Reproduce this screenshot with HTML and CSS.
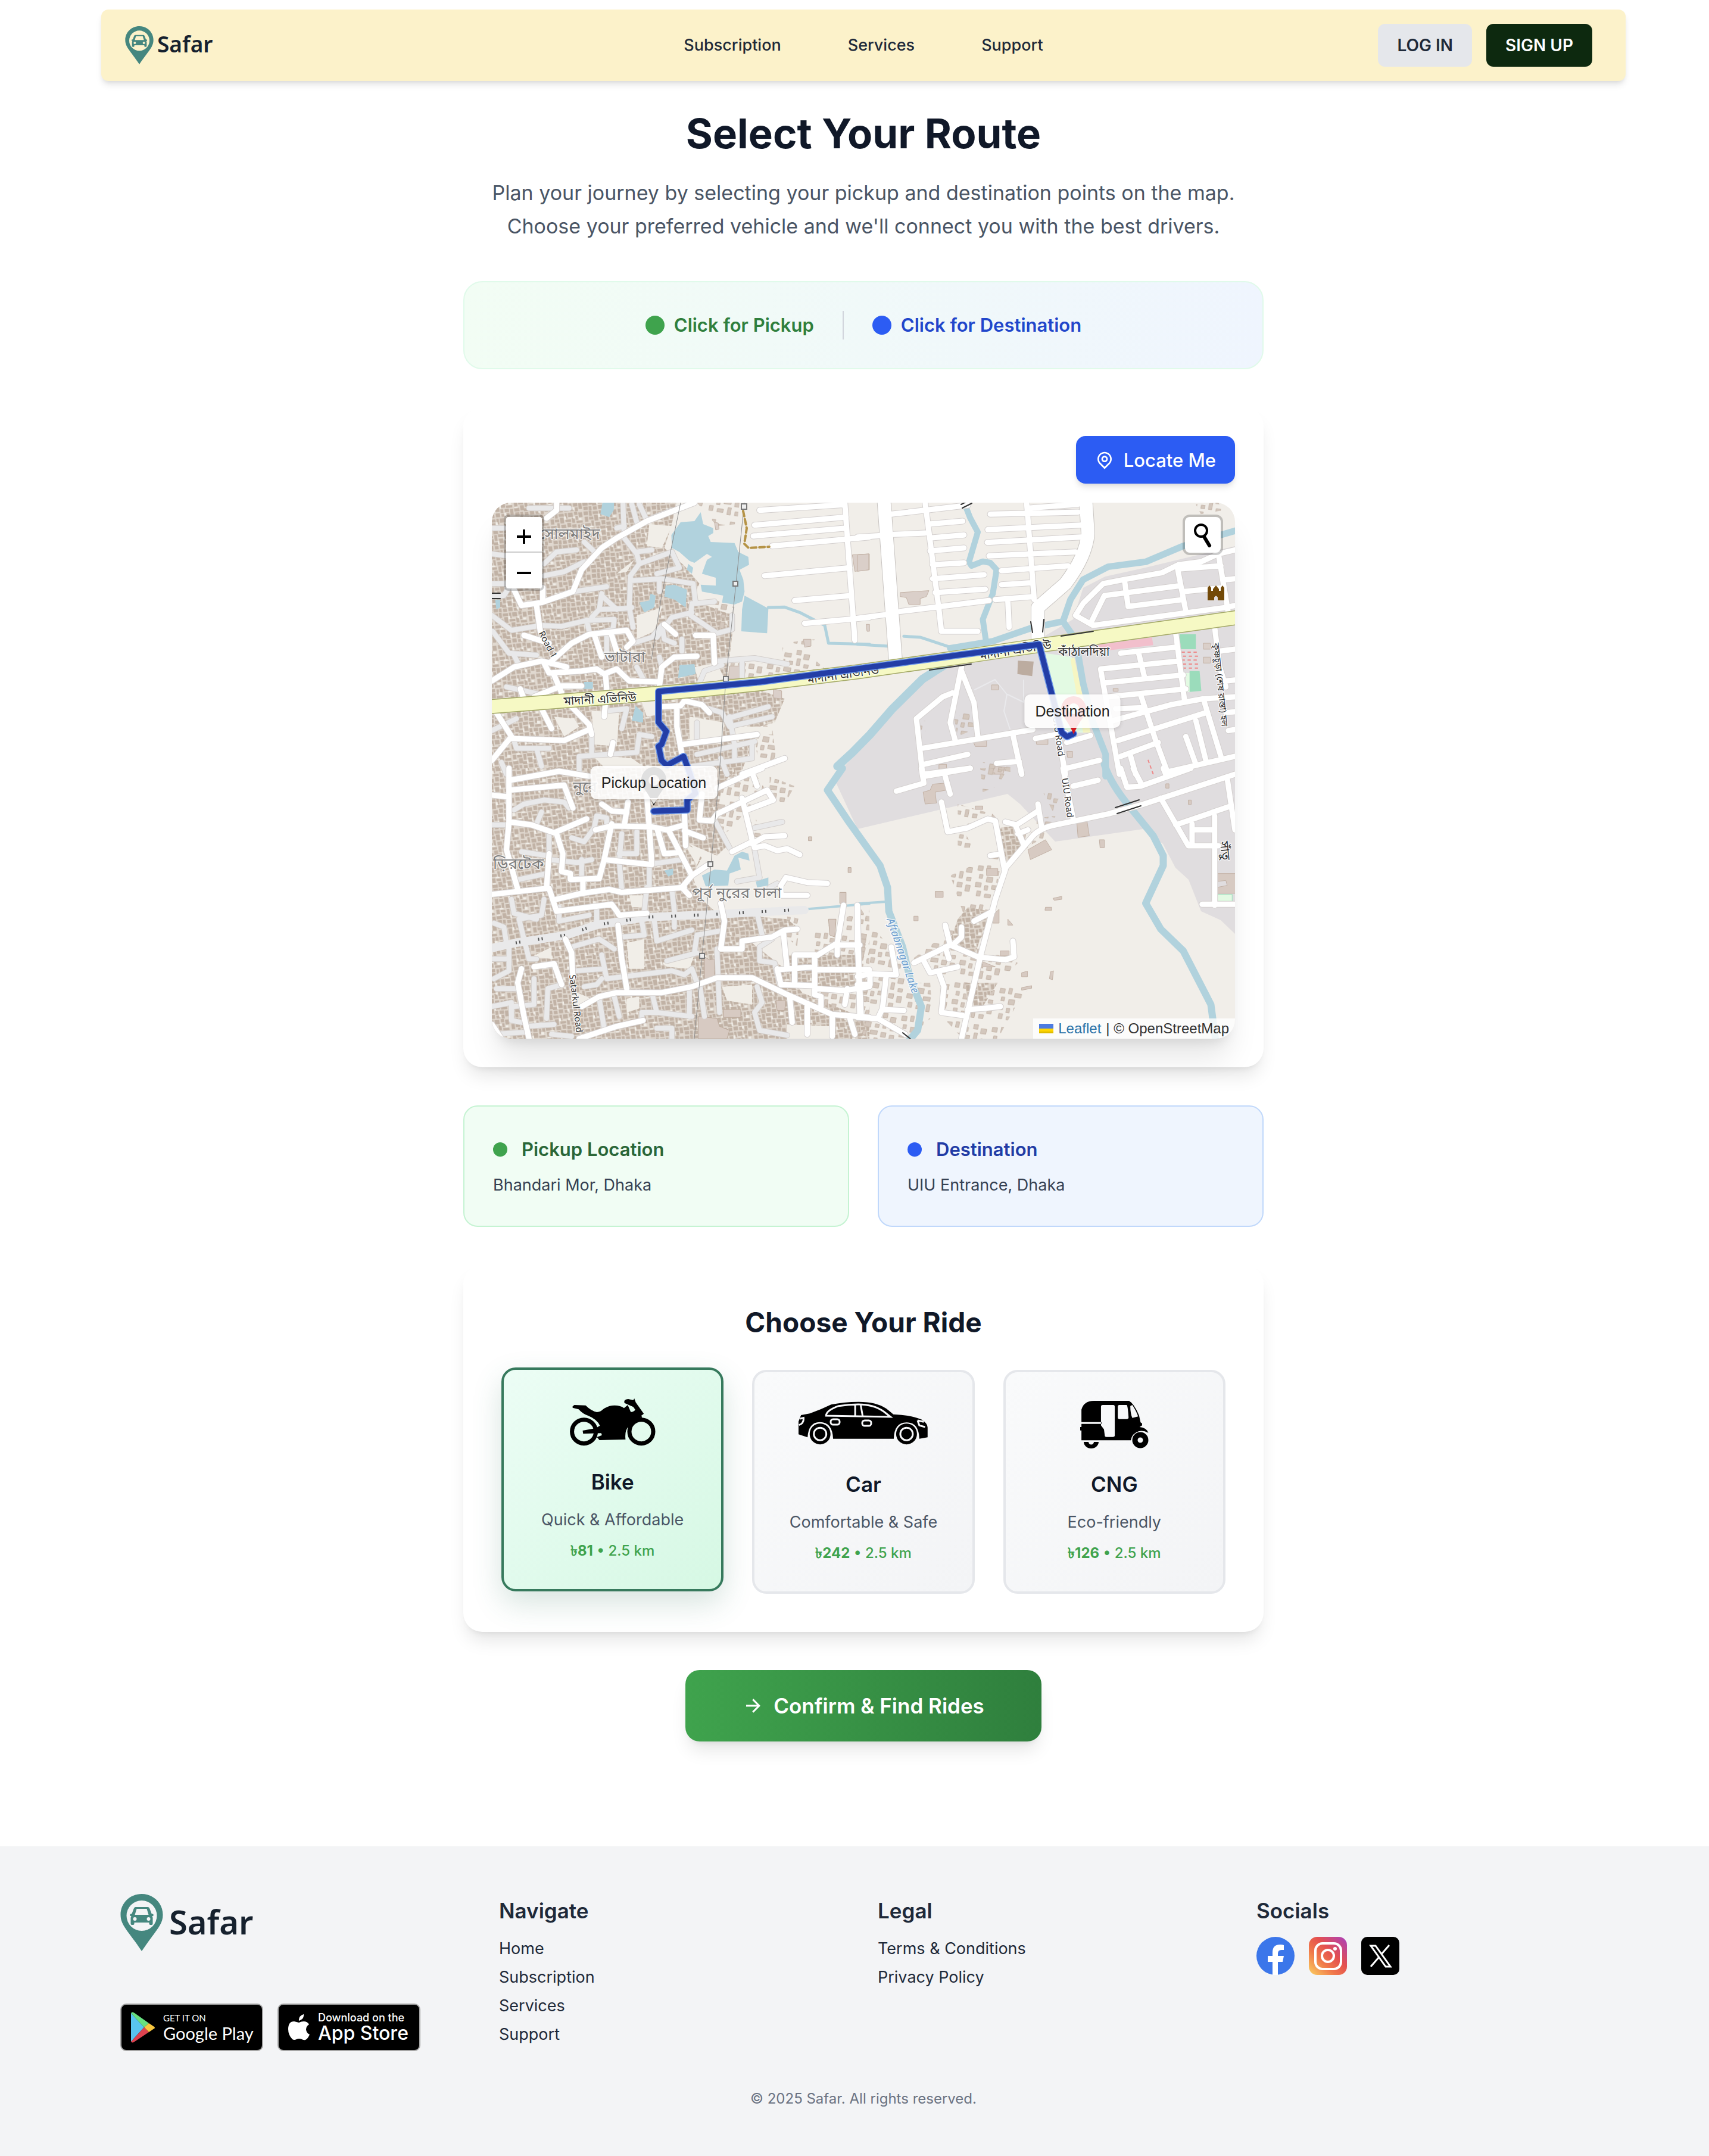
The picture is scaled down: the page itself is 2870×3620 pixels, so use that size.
FILE: index.html
```html
<!DOCTYPE html>
<html lang="en">
<head>
<meta charset="utf-8">
<meta name="viewport" content="width=device-width, initial-scale=1">
<title>Safar – Select Your Route</title>
<link rel="stylesheet" href="styles.css">
</head>
<body>
<svg class="sprite" aria-hidden="true">
  <symbol id="logo-pin" viewBox="0 0 71 96">
    <path fill-rule="evenodd" d="M35.500 0C55 0 71 15 71 35C71 53 58 62 35.500 96C13 62 0 53 0 35C0 15 16 0 35.500 0ZM35.500 11A25 25 0 1 0 35.500 62A25 25 0 1 0 35.500 11Z"/>
    <path fill-rule="evenodd" d="M25 22H46Q48 22 49 25L52 33L55 34V37H53L54 40V50Q54 52 52 52H50Q48 52 48 50V48H23V50Q23 52 21 52H19Q17 52 17 50V40L18 37H16V34L19 33L22 25Q23 22 25 22ZM27 25L24 35H47L44 25ZM24 39A3 3 0 1 0 24 45A3 3 0 1 0 24 39ZM47 39A3 3 0 1 0 47 45A3 3 0 1 0 47 39Z"/>
  </symbol>
</svg>

<div class="page">
  <header class="navbar">
    <a class="logo" href="#"><svg class="logo-pin"><use href="#logo-pin"/></svg><span class="logo-name">Safar</span></a>
    <nav class="nav-links">
      <a href="#">Subscription</a>
      <a href="#">Services</a>
      <a href="#">Support</a>
    </nav>
    <div class="nav-actions">
      <button class="btn btn-light" type="button">LOG IN</button>
      <button class="btn btn-dark" type="button">SIGN UP</button>
    </div>
  </header>

  <main class="content">
    <h1>Select Your Route</h1>
    <p class="lead">Plan your journey by selecting your pickup and destination points on the map.<br>Choose your preferred vehicle and we'll connect you with the best drivers.</p>

    <section class="legend">
      <div class="legend-item legend-pickup"><span class="dot dot-lg dot-green"></span>Click for Pickup</div>
      <span class="legend-divider"></span>
      <div class="legend-item legend-dest"><span class="dot dot-lg dot-blue"></span>Click for Destination</div>
    </section>

    <section class="card map-card">
      <button class="locate" type="button">
        <svg viewBox="0 0 24 24" width="32" height="32" fill="currentColor"><path d="M12 20.8995L16.9497 15.9497C19.6834 13.2161 19.6834 8.78392 16.9497 6.05025C14.2161 3.31658 9.78392 3.31658 7.05025 6.05025C4.31658 8.78392 4.31658 13.2161 7.05025 15.9497L12 20.8995ZM12 23.7279L5.63604 17.364C2.12132 13.8492 2.12132 8.15076 5.63604 4.63604C9.15076 1.12132 14.8492 1.12132 18.364 4.63604C21.8787 8.15076 21.8787 13.8492 18.364 17.364L12 23.7279ZM12 13C13.1046 13 14 12.1046 14 11C14 9.89543 13.1046 9 12 9C10.8954 9 10 9.89543 10 11C10 12.1046 10.8954 13 12 13ZM12 15C9.79086 15 8 13.2091 8 11C8 8.79086 9.79086 7 12 7C14.2091 7 16 8.79086 16 11C16 13.2091 14.2091 15 12 15Z"/></svg>
        Locate Me
      </button>

      <div class="map">
        <svg class="map-canvas" viewBox="0 0 1248 900" preserveAspectRatio="xMidYMid slice">
          <defs>
            <pattern id="dense" width="72" height="66" patternUnits="userSpaceOnUse" patternTransform="rotate(-6) scale(1.9 2.4)">
              <rect width="72" height="66" fill="#e0d8cf"/>
              <path fill="#c1b2a5" d="M1 1h9v8H1zM12 0h6v11h-6zM20 2h11v6H20zM33 1h5v12h-5zM40 1h10v9H40zM53 0h7v7h-7zM62 2h8v10h-8zM2 12h7v11H2zM11 13h9v6h-9zM22 10h8v12h-8zM33 15h12v5H33zM47 12h6v11h-6zM55 9h5v8h-5zM56 19h13v5H56zM1 26h12v6H1zM15 21h5v12h-5zM23 25h10v8H23zM36 22h8v9h-8zM46 26h9v7h-9zM58 27h5v11h-5zM65 26h6v8h-6zM2 35h7v10H2zM11 36h10v5H11zM24 35h6v12h-6zM32 34h11v6H32zM45 35h10v10H45zM57 41h13v5H57zM1 48h11v7H1zM14 43h8v11h-8zM33 43h9v10h-9zM44 48h6v8h-6zM53 48h9v7h-9zM64 49h7v12h-7zM2 57h9v7H2zM13 57h6v8h-6zM21 50h10v6H21zM22 58h8v7h-8zM33 56h9v8h-9zM45 58h8v6h-8zM56 57h6v8h-6z"/>
              <path fill="#f1eee8" d="M31 8h4v7h-4zM50 10h4v4h-4zM10 32h8v3h-8zM43 40h3v7h-3zM62 14h5v4h-5zM30 47h3v8h-3zM2 45h7v3H2zM62 34h6v6h-6zM51 56h4v6h-4z"/>
            </pattern>
            <pattern id="sparse" width="83" height="71" patternUnits="userSpaceOnUse" patternTransform="rotate(9) scale(2.2 2.8)">
              <path fill="#d3c7bd" stroke="#c0b0a3" d="M3 4h9v8H3zM19 2h6v10h-6zM31 10h12v7H31zM52 3h8v8h-8zM66 9h10v9H66zM8 19h6v7H8zM22 22h11v9H22zM41 24h7v6h-7zM55 18h6v12h-6zM69 27h8v6h-8zM4 34h10v8H4zM21 38h6v8h-6zM34 36h13v7H34zM54 38h9v8h-9zM70 41h8v11h-8zM9 49h7v9H9zM24 53h11v6H24zM43 49h6v13h-6zM57 55h8v7h-8z"/>
            </pattern>
            <clipPath id="map-area"><rect width="1248" height="900"/></clipPath>

            <g id="roads-nw">
              <path d="M870 72L680 165L560 250L500 300L420 410L385 520L260 575L180 590L150 510M240 590L255 720M265 500V570M320 72V110L280 150M190 740L290 780M62 970L150 900L260 870L360 900M300 870L380 780L450 735L600 715L625 770L600 800M470 735L500 850M540 740L560 820M270 880L290 930L420 920L480 910L510 935L560 910L610 970L730 975M515 935L520 1010L510 1150M310 940L340 1030M730 1000L740 900L790 850L880 845M175 1010L190 1060M230 1050L340 995H420M750 685L795 735M875 740H945L950 880M260 1110L300 1210M80 1130L140 1250L62 1370M140 1260L350 1270L450 1215M380 1100L450 1190L460 1240M740 1100L815 1095L830 1070L900 1090L930 1130M800 1100V1200L820 1340M820 1290L1120 1240M1060 1440L1230 1360M545 1280L535 1340"/>
              <path d="M1470 72L1480 250L1510 765M1130 110L1470 82M1110 185L1475 145M1105 240L1475 200M1180 290L1568 245M1150 440L1490 400M1270 565L1495 540M1310 680L1568 650"/>
            </g>
            <g id="lanes-nw">
              <path d="M585 72L590 250L640 330L650 380L615 440L610 600L625 700M650 380L780 320L810 400L720 430M640 320L700 310M615 465L740 455L865 480L875 580L950 570M730 460V520M860 580L855 640L960 730L1020 710V640M720 750L780 650L860 625M625 780L700 750L740 690L750 760L790 780M270 440L350 420L430 370M390 520L520 495M500 530L490 610L590 605L620 600M500 540L560 610M490 610L460 650M62 640L140 715L260 690L340 695L440 665L550 660L545 710L480 730M440 665L450 720M65 720L130 830L240 840M150 840L170 890M62 200H110M62 330L120 340M62 480H140L110 540L62 545M210 100H370M560 200L590 190M430 270L480 330M270 380L320 320L400 310M620 80L640 170M650 80L680 160L780 110"/>
              <path d="M960 870L1110 855L1240 885M1060 870V960M890 980L910 920L980 890M730 850L740 900M820 760V820M640 900L670 970M300 1050L120 1000M62 1220L160 1160M150 1270L160 1310L290 1310M240 1310L260 1400M410 1440V1350L640 1330L650 1240L700 1250M460 1240V1340M580 1210L600 1110L530 1120M520 740V840M1000 1160L1165 1100M1010 1200L1180 1150M1010 1150L1030 1290V1360M880 1180V1260M880 1340L1110 1275M860 1400L1100 1360V1290M930 1110L980 1130L1010 1200M975 1360L1000 1440M100 1380L120 1440"/>
            </g>
            <g id="roads-ne">
              <path d="M270 72L325 610L335 720H480M0 245L95 238M145 232L270 225M135 130L440 85M285 180L420 165M290 250L425 235M290 315L425 300M300 385L425 375M300 455L505 435M310 525L510 508M0 655L120 635M170 620L525 565M550 560L700 545M600 565L605 700M675 72L705 560M680 100L880 80M530 130L880 120M520 208L890 185M518 272L890 245M525 340L870 320M575 415L840 390M575 485L700 475"/>
              <path d="M1506 310L1440 330L1370 370L1280 385L1215 425L1060 460L980 480L900 580L870 640L940 690L1470 600L1506 590M1065 460L1080 595L1300 560M930 680L985 540L1290 490M1440 330L1480 630M1275 390L1310 620M1290 405L1450 390M1300 520L1460 500M1470 460L1506 455"/>
              <path d="M970 910L1280 870M970 910L1045 1440M985 980L1300 940M1000 1050L1310 1010M1050 830L1270 800M1120 820L1145 950M1270 730L1305 1070M1020 1170L1250 1090L1380 1060L1506 1050M1130 1040L1190 1270L1240 1440M1030 1110L1140 1105M1040 1270L1390 1130M1050 1350L1200 1280M1090 1350L1110 1440M1230 1430L1506 1350M1350 1170L1390 1370M1310 1250L1350 1390M1425 700L1445 900L1470 1000M1380 1060L1450 1350M1445 820L1506 810M1470 970L1506 965M1470 1130L1506 1125M1480 1220L1506 1215"/>
              <path d="M415 900L370 1180L390 1270M415 920L465 1080L480 1250M380 1030L340 1050L235 1160L260 1440M255 1310L700 1215M710 1260L830 1230M620 1240L655 1440M265 1390L440 1340M265 1440L450 1410M555 1385L645 1375M800 1240L830 1440M835 1280L930 1245M835 1410L965 1370"/>
            </g>
            <g id="roads-sw">
              <path d="M62 135L130 145M135 60L330 15L450 40M130 110L350 85L385 200M130 0V270L120 410L165 610M130 270L220 285L310 325L440 255M320 330L345 430L340 520L375 530V560L490 555L510 460L540 280M510 460L620 475L700 485L690 300L680 130M475 310L540 290L700 295L760 310L830 285M590 290L605 170M500 180L540 215L600 220M720 300L750 430L800 425M770 320L860 540L920 490M860 540L820 600L850 640M830 220L835 390M830 315L905 350"/>
              <path d="M62 635L280 605L290 430M290 605L320 720L540 685L560 720L570 740L680 730M320 660L420 630L530 610L580 625L830 600M425 630V560M565 790L580 960L600 1110M355 860L380 930L385 1050M230 1000L310 985L340 1090M180 1010L165 1080L190 1250L210 1362M62 1290L100 1362M420 1200L490 1150L560 1130L740 1130L860 1100L960 1055H1100L1240 1140L1420 1240L1568 1255M410 1362L560 1300L665 1270M975 680L990 770L975 910H1060V870L1180 850L1230 815L1280 810M1225 830L1240 1010M1200 1010L1215 1090L1350 1095M1270 940H1350M1270 940V1090M1200 1015L1350 1000M1350 950V1140L1375 1150V1200M1350 950L1440 880L1465 690M1520 690L1530 1250M1350 1015H1568M1440 940V890L1530 890M1250 1150L1260 1280M1320 1200V1340M1420 1240V1350M1490 1260L1510 1340M1360 1110L1470 1120L1568 1100M1470 1190L1480 1110"/>
              <path d="M960 100L1100 20L1140 0M900 130L890 260L940 265L960 230L1160 110L1185 160L1080 210M1100 20L1120 90M1060 150L1100 360L1110 400L1150 390L1200 415L1240 405L1290 435M1100 380L1150 345L1230 340M1020 420L1100 370M1215 640V590L1235 550L1320 575L1400 580M1215 640H1320"/>
            </g>
            <g id="lanes-sw">
              <path d="M62 285H120M270 160L190 180L150 210M270 160L350 170L370 200M240 280L260 220M380 350L430 370L470 300L480 240L520 250V290M290 330V460L400 475L460 460M580 330L570 470L580 610M640 320V430H570M170 560L280 530M180 420L280 440M420 460V560M690 490V600M710 480L820 460M140 660L150 730L240 760M70 780L110 800L120 880M270 660L260 740L170 760L210 960H240M130 900V1020L70 1060M62 960H130M80 1110H160M330 700V770L450 740M480 700V790M780 610L790 720V800M680 600L670 720M380 900L490 860L550 910M580 850L670 840L660 770M710 770L720 870L860 815M870 930L880 840L970 820M760 970L880 930M500 940L520 1060L780 1020L830 1040L860 1010L880 1080M400 1020L510 1010M430 1100L480 1090L500 1060M280 1260L285 1110L340 1090M550 1150L570 1250M490 1160L510 1310M700 1130L720 1230L660 1230V1270M720 1230L860 1250M850 1110V1250M960 910L970 1230M890 1080L910 1250M1180 860L1130 900V970L1190 980L1210 1090M1120 1100L1140 1180L1110 1230L1130 1320L1240 1345M1120 730L1140 840M1110 410L1130 550L1040 570M1170 600L1200 580M950 260L1010 400M1110 300L1220 270M230 1060V1190L150 1200M62 1200L140 1180V1270L180 1280M62 1340L190 1330M200 1300L310 1290M300 1340L380 1350M720 1310H780V1362"/>
            </g>
            <g id="roads-se">
              <path d="M255 0L265 75L155 115M270 40L450 0M350 40L370 130M335 170L360 320L440 300L520 255L550 265L585 500M530 440L575 430M585 510L700 340Q730 300 790 285L1000 230L1130 185L1506 30M590 510L550 660L490 950L415 1362M720 180L735 300M590 270L635 285L720 215M630 285L665 390M640 330L680 310M820 0L860 250M860 90L960 60M1050 0L1075 95L1130 90L1330 0M1100 0L1135 85M1220 0L1230 30M1210 150L1320 390L1440 390M1270 285L1490 190M1335 280V385M1340 310H1420M1425 240V690M1375 685H1506M1475 50L1506 310"/>
              <path d="M350 790L370 890L480 950L590 965L625 950L620 870M370 890L225 980M350 900L365 960M415 800V850L380 890M465 770L540 720M260 960L290 1030L400 1000M325 1030L345 1100L335 1230L420 1245M440 1215L500 1210L570 1200M135 900L155 1040L50 1035M115 1040L100 1210L85 1250M100 1215L185 1220M0 1255L80 1260L190 1340M0 1050L50 1035V1090H0M0 700V890L15 1250M650 0L655 30"/>
            </g>
            <path id="avenue" d="M-10 343L184 328L353 314L450 304L614 284L782 260L917 240L1258 192"/>
            <path id="route" d="M272 518L328 516V499L342 488L333 456L322 426L294 441L285 433L280 409L285 406L293 384L280 369V317L450 301L614 279L782 256L919 238L957 386L966 393L977 388"/>
          </defs>

          <g clip-path="url(#map-area)">
            <rect width="1248" height="900" fill="#f1eee9"/>
            <path fill="#e0dddf" d="M580 456L614 419L723 303L753 286L782 262L925 226L976 196L993 143L1030 124L1098 109L1248 73V724L1224 701L1191 686L1170 633L1148 613L1127 573L1094 548L946 569L887 506L866 489L614 548L576 466Z"/>

            <g transform="matrix(.4209 0 0 .3333 -26 -24)">
              <path fill="url(#dense)" d="M40 60H800L780 180L750 300L830 390L890 480L860 560L980 620L1030 640L1000 960L1230 1060L1190 1180L1130 1200L1050 1450H40Z"/>
              <path fill="url(#sparse)" d="M880 72H1050L1040 180L960 190ZM950 560L1030 600L1020 700L960 720ZM1220 780L1350 760L1340 850L1400 920L1230 950ZM1000 880H1300V960H1000ZM1100 1180L1180 1200L1200 1400L1130 1420Z"/>
              <path fill="#f1eee8" d="M640 640L740 600L710 720L640 760ZM460 1120L570 1130L560 1300L470 1290ZM310 1150L390 1160L410 1200L350 1250ZM630 360L600 420L560 430ZM870 900L960 880L990 960L890 990ZM690 180L780 190L740 300L680 290ZM850 1150L990 1180L980 1260L850 1280ZM1010 1200H1180V1240H1030ZM460 1340L620 1360L690 1420H520ZM650 1040L720 1060V1140L680 1150Z"/>
              <path fill="#dacfc9" stroke="#c3b2a6" d="M1500 335L1568 330V410L1510 418ZM1305 760H1335V795L1310 800ZM1010 895H1055V960H1005ZM950 170L965 175L968 205L955 210ZM1185 1010L1218 1020V1060L1185 1055Z"/>
              <path fill="#b1d2dd" d="M495 130L505 60H550L548 110L530 145ZM815 170L870 165L895 120L905 180L945 200V225L925 240L935 270L1030 275L1045 320L1085 345L1088 385L1050 410L1065 460L1070 520L1060 570L1030 585L980 575L985 540L900 520L895 485L955 490V450L900 430L920 360L940 345L920 330L870 375L850 365L810 320L780 300L778 235ZM755 490L790 485L840 510L835 600L790 560L750 545ZM695 530L715 540L710 600L670 625L650 575L690 565ZM1070 540L1165 605L1160 730L1057 720L1060 610ZM810 890L870 885L875 935L805 955ZM430 975H465V1010H425ZM635 1095L665 1130V1180L620 1170ZM75 560H95V600L80 610ZM845 380L865 400L860 430L840 410Z"/>
              <path class="line" stroke="#b1d2dd" stroke-width="5" d="M1165 600L1230 598L1290 625L1390 690L1405 780L1568 785"/>
            </g>
            <g transform="matrix(.4209 0 0 .3333 -26 446)">
              <path fill="url(#dense)" d="M40 0H1040L980 80L960 250L1010 380L960 440L850 380L900 450L860 540L900 660L960 730L1240 760L1280 800L1100 880L1220 1000L1300 1130L1568 1270V1380H40Z"/>
              <path fill="url(#sparse)" d="M960 60L1100 0L1150 100L1020 300L940 380L900 300ZM1170 40L1270 90L1230 180L1170 140ZM1110 230L1150 400L1080 330ZM1240 740L1290 760L1280 900L1240 850ZM1350 820L1568 700V1250L1350 1180Z"/>
              <path fill="url(#dense)" d="M1240 940H1350V1100L1240 1090ZM1360 940H1520V1100H1360Z"/>
              <path fill="#f1eee8" d="M610 640L680 640V700H620ZM600 880L670 860V1010H610ZM830 380L900 420L880 490ZM740 980L870 940L850 1010L760 1000ZM380 1120L480 1170L430 1200L380 1180ZM980 1100L1100 1090V1190L1000 1170ZM1240 1290L1420 1300V1362H1240ZM600 1160L650 1150V1210L600 1230ZM220 950L300 900V960ZM1050 480L1130 470V540L1060 550Z"/>
              <path fill="#d7cac2" stroke="#bba99b" d="M910 950L930 965L950 960V1060H910ZM1195 1170H1235L1230 1220H1200ZM985 1215H1055V1255H985ZM885 1250L960 1260L970 1300L1010 1320L1000 1362H885ZM1450 625H1475V680H1450ZM1405 760H1435L1430 850L1410 840ZM1325 345H1338V365H1325ZM1483 500H1495V525H1483Z"/>
              <path fill="#b1d2dd" d="M1060 420L1085 430L1090 465L1045 450L1055 510L1010 530L1005 590L915 595L900 540L950 510L1000 515L1030 440ZM1115 570L1165 550V590L1120 600ZM750 515L785 505V535L765 545Z"/>
              <path class="line" stroke="#b1d2dd" stroke-width="4" d="M1310 710L1568 682"/>
            </g>
            <g transform="matrix(.4209 0 0 .3333 614 -24)">
              <path fill="#e3fae3" d="M750 830L855 850L885 1040L920 1230L815 1230ZM1310 930H1330V1025H1312Z"/>
              <path fill="#f6f6c3" d="M850 860L865 850L930 1230H900Z"/>
              <path fill="#f2bfcc" d="M950 790L1175 750L1180 790L960 822Z"/>
              <path fill="#9bdcbb" d="M1285 735H1350V810H1290ZM1325 920H1365L1372 1020L1325 1025Z"/>
              <path class="line" stroke="#e88" stroke-width="2" stroke-dasharray="4 6" d="M1295 825H1360M1300 845H1362M1295 865H1358M1300 885H1362M1300 905H1362M1160 1370L1180 1440"/>
              <path fill="#bcaca0" d="M640 868L703 872L697 946L638 935Z"/>
              <path fill="#dacfc9" stroke="#c3b2a6" d="M0 335L45 330V410L0 418ZM170 525L285 515L275 545L250 555V585H205L195 550L170 545ZM710 1250L760 1240V1290H715ZM325 1390H355V1420H325ZM535 1400L590 1405L580 1440H540ZM35 685H48V720H38ZM1020 1008H1040V1022H1020ZM835 1325H858V1355H838ZM460 1270H515V1300H470ZM1380 780H1408V810H1380ZM1380 850H1408V880H1380ZM535 990H562V1015H535Z"/>
              <path fill="url(#sparse)" d="M385 1160L440 1120L470 1210L400 1250ZM245 1180L270 1170V1250H245ZM1350 80L1370 130L1460 110L1440 72ZM500 1380H610V1440H520Z"/>
              <path class="line" stroke="#b1d2dd" stroke-width="10" d="M430 85L450 150L480 220L445 370L455 390L500 368L530 375L555 410L540 530L500 660L515 790"/>
              <path class="line" stroke="#b1d2dd" stroke-width="11" d="M1530 205L1300 290L1150 370L1000 395L900 460L850 560L820 670L690 705L540 770L370 805M820 670L870 760L900 980L940 1180L990 1340V1450"/>
              <path class="line" stroke="#b1d2dd" stroke-width="5" d="M370 800L250 750L185 745M0 785L125 795"/>
              <path class="line" stroke="#b1d2dd" stroke-width="14" d="M360 880L260 960L140 1110L50 1240L-20 1330L-80 1400"/>
            </g>
            <g transform="matrix(.4209 0 0 .3333 614 446)">
              <path fill="url(#sparse)" d="M0 680L60 800L130 900L230 1080L290 1080L300 1250L200 1362H0ZM370 540L580 420L540 720L480 950L560 940L640 980L560 1080L690 1100L640 1180L560 1362H420L330 1240L330 1040L220 960L430 760ZM400 180L540 230L560 260L420 300L460 400L400 400ZM550 260L590 270L790 240L760 340L640 420L590 460ZM490 0H600L560 90L500 120ZM740 120L810 130L780 220Z"/>
              <path fill="url(#dense)" d="M440 700L530 720L470 930L370 870L400 760ZM560 300L630 290L680 400L590 470ZM430 1080L560 1080L500 1200L440 1210Z"/>
              <path fill="#d7cac2" stroke="#c3b2a6" d="M875 270L915 260L925 340L880 348ZM965 360H985V400H968ZM680 410L750 360L775 410L690 460ZM262 120L290 110L300 80L345 75L355 110L310 120L315 175L270 180ZM310 620H342V650H310ZM780 655L815 645V660L785 665ZM750 700H775V715H748ZM540 740L565 710V780H540ZM770 1025L782 1020L778 1065L766 1060ZM1435 530H1510V630H1435V600L1475 590L1470 565L1435 570ZM1230 78H1243V100H1230ZM1320 160H1332V182H1320ZM600 760L620 790H600ZM470 190H500V207H470ZM225 745H242V768H225ZM515 505H560V540H515ZM570 920H605V945H570ZM655 1030L678 1022V1050H655ZM655 1105L695 1095V1108L655 1118ZM500 975L550 1000H500Z"/>
              <path fill="#e3fae3" stroke="#9bdcbb" d="M1435 635H1495V670H1435Z"/>
              <path class="line" stroke="#b1d2dd" stroke-width="12" d="M985 -20Q1010 80 1090 200L1180 340L1220 440V490L1150 680L1210 810L1300 920L1410 1190L1430 1380M-60 0L-120 110L-40 260L90 490L120 600L125 720L180 900L210 1060L255 1200L240 1320L200 1380"/>
              <path class="line" stroke="#b1d2dd" stroke-width="4" d="M0 682L115 672"/>
            </g>

            <g class="lane-case">
              <use href="#lanes-nw" transform="matrix(.4209 0 0 .3333 -26 -24)"/>
              <use href="#lanes-sw" transform="matrix(.4209 0 0 .3333 -26 446)"/>
            </g>
            <g class="lane-fill">
              <use href="#lanes-nw" transform="matrix(.4209 0 0 .3333 -26 -24)"/>
              <use href="#lanes-sw" transform="matrix(.4209 0 0 .3333 -26 446)"/>
            </g>
            <path class="line" stroke="#e9e9ea" stroke-width="14" d="M-10 750L41 739L125 726L176 709L260 696L378 691L525 684"/>
            <path class="culverts" d="M40 739L125 726L176 709L260 696L378 691L500 684"/>

            <g class="wide-case">
              <path d="M658 -10L678 266M997 -10L1001 52Q998 90 963 136L917 176V226"/>
            </g>
            <g class="road-case">
              <use href="#roads-nw" transform="matrix(.4209 0 0 .3333 -26 -24)"/>
              <use href="#roads-ne" transform="matrix(.4209 0 0 .3333 614 -24)"/>
              <use href="#roads-sw" transform="matrix(.4209 0 0 .3333 -26 446)"/>
              <use href="#roads-se" transform="matrix(.4209 0 0 .3333 614 446)"/>
            </g>
            <g class="wide-fill">
              <path d="M658 -10L678 266M997 -10L1001 52Q998 90 963 136L917 176V226"/>
            </g>
            <g class="road-fill">
              <use href="#roads-nw" transform="matrix(.4209 0 0 .3333 -26 -24)"/>
              <use href="#roads-ne" transform="matrix(.4209 0 0 .3333 614 -24)"/>
              <use href="#roads-sw" transform="matrix(.4209 0 0 .3333 -26 446)"/>
              <use href="#roads-se" transform="matrix(.4209 0 0 .3333 614 446)"/>
            </g>

            <use href="#avenue" class="line" stroke="#a3a866" stroke-width="25"/>
            <use href="#avenue" class="line" stroke="#f6f9c4" stroke-width="22"/>
            <path class="line" stroke="#333" stroke-width="2" d="M735 281L805 271M956 224L1010 216M1047 512L1087 499M1050 522L1090 509M788 3L800 -3M790 9L806 1M905 200L908 218M927 196L925 217M0 152H14M0 161H14M690 890L705 902"/>
            <path class="line" stroke="#8d8d8d" stroke-width="1" d="M317 0L285 156L268 263M424 0L410 136L393 296L382 456L368 607L353 761L340 900"/>
            <path fill="#eee" stroke="#777" stroke-width="2" d="M419 2h9v9h-9zM405 132h8v8h-8zM389 292h8v8h-8zM363 603h8v8h-8zM349 757h8v8h-8z"/>
            <path class="line" stroke="#b59346" stroke-width="4" stroke-dasharray="9 5" d="M422 14L428 43L424 69L431 76L466 74"/>
            <path class="line" stroke="#e9e9ec" stroke-width="2" d="M811 314L845 297L865 322L860 350L870 380M893 298V335L866 322"/>
            <path fill="#734a08" d="M1202 148v-5l3-4 3 4v5h3v-3l5-6 5 6v3h3v-5l3-4 3 4v21h-11v-5q-3-5-6 0v5h-11z"/>

            <g class="place">
              <text x="79" y="61">সোলমাইদ</text>
              <text x="189" y="268">ভাটারা</text>
              <text x="136" y="486">নুরে</text>
              <text x="2" y="615">ড়িরটেক</text>
              <text x="336" y="664">পূর্ব নুরের চালা</text>
            </g>
            <g class="street">
              <text x="121" y="340" transform="rotate(-3 121 340)">মাদানী এভিনিউ</text>
              <text x="530" y="304" transform="rotate(-8 530 304)">মাদানী এভিনিউ</text>
              <text x="820" y="264" transform="rotate(-9 820 264)">মাদানী এভিনিউ</text>
              <text x="951" y="257">কাঁঠালদিয়া</text>
              <text class="narrow" x="1211" y="236" transform="rotate(84 1211 236)">কৃষ্ণচূড়া (শেষ রাস্তা) হল</text>
              <text x="1223" y="569" transform="rotate(84 1223 569)">সাঁতু</text>
              <text class="latin" x="78" y="219" transform="rotate(62 78 219)">Road 1</text>
              <text class="latin" x="130" y="793" transform="rotate(83 130 793)">Satarkul Road</text>
              <text class="latin" x="942" y="360" transform="rotate(82 942 360)">UIU Road</text>
              <text class="latin" x="957" y="463" transform="rotate(82 957 463)">UIU Road</text>
            </g>
            <text class="lake" x="663" y="700" transform="rotate(71 663 700)">Aftabnagar Lake</text>

            <use href="#route" class="line" stroke="#6d97e8" stroke-width="12"/>
            <use href="#route" class="line" stroke="#233ea6" stroke-width="9"/>
            <path fill="#000" d="M272 509Q266 494 257 482Q251 474 251 465A21 21 0 0 1 293 465Q293 474 287 482Q278 494 272 509ZM272 457a9 9 0 1 0 .1 0Z" fill-rule="evenodd"/>
            <path fill="#f1eee9" d="M265 496H279L272 506Z"/>
            <path fill="#e01b24" d="M977 389Q971 374 962 362Q956 354 956 346A21 21 0 0 1 998 346Q998 354 992 362Q983 374 977 389ZM977 337a9 9 0 1 0 .1 0Z" fill-rule="evenodd"/>
          </g>
        </svg>

        <div class="map-zoom">
          <button type="button" aria-label="Zoom in"><svg viewBox="0 0 24 24" width="24" height="24"><path d="M12 0V24M0 12H24"/></svg></button>
          <button type="button" aria-label="Zoom out"><svg viewBox="0 0 24 24" width="24" height="24"><path d="M0 12H24"/></svg></button>
        </div>
        <button class="map-search" type="button" aria-label="Search">
          <svg viewBox="0 0 60 60" width="60" height="60"><ellipse cx="27" cy="23" rx="10" ry="10"/><path d="M32 33L41 48" stroke-width="6"/></svg>
        </button>
        <div class="map-tip tip-pickup">Pickup Location</div>
        <div class="map-tip tip-dest">Destination</div>
        <div class="map-credit">
          <svg viewBox="0 0 24 16" width="24" height="16"><path fill="#4c7be1" d="M0 0h24v8H0z"/><path fill="#ffd500" d="M0 8h24v5H0z"/><path fill="#e0bc00" d="M0 13h24v3H0z"/></svg>
          <a href="#">Leaflet</a><span>| © OpenStreetMap</span>
        </div>
      </div>
    </section>

    <div class="places">
      <section class="place-card place-pickup">
        <h2><span class="dot dot-green"></span>Pickup Location</h2>
        <p>Bhandari Mor, Dhaka</p>
      </section>
      <section class="place-card place-dest">
        <h2><span class="dot dot-blue"></span>Destination</h2>
        <p>UIU Entrance, Dhaka</p>
      </section>
    </div>

    <section class="card rides-card">
      <h2>Choose Your Ride</h2>
      <div class="rides">
        <button class="ride ride-selected" type="button" aria-pressed="true">
          <svg viewBox="0 0 144 80" width="144" height="80">
            <g transform="scale(.4209 .3333) translate(-327 -235)"><path d="M338 275L345 268L390 270Q412 298 435 304Q450 302 457 292Q480 270 505 270Q530 270 543 284L558 268L570 303Q580 305 588 292L580 278L545 258Q540 240 560 238L580 244L584 235L590 255L622 312L612 322L616 332Q575 340 562 375Q545 395 549 442L445 445L435 430L455 420L452 410L380 413L378 397L430 385L447 372Q435 340 400 322Q380 315 362 290L338 282Z"/></g>
            <circle cx="23.600" cy="55.700" r="20" fill="none" stroke="#000" stroke-width="7"/>
            <circle cx="120" cy="55.700" r="20" fill="none" stroke="#000" stroke-width="7"/>
          </svg>
          <span class="ride-name">Bike</span>
          <span class="ride-desc">Quick &amp; Affordable</span>
          <span class="ride-price"><b>৳81</b> • 2.5 km</span>
        </button>
        <button class="ride" type="button" aria-pressed="false">
          <svg viewBox="0 0 217 80" width="217" height="80">
            <g transform="scale(.4209 .3333) translate(-1240 -246)">
              <path d="M1250 318L1285 310Q1330 290 1370 265Q1420 251 1480 251Q1550 251 1590 285Q1610 305 1618 314Q1690 318 1730 340Q1755 360 1755 380V430L1722 437Q1720 355 1671 355Q1622 355 1620 437H1378Q1375 353 1325 353Q1280 353 1276 430L1240 415V350Z"/>
              <g class="cutout"><path d="M1350 321Q1350 295 1400 272Q1440 264 1478 264Q1540 264 1580 300L1607 327ZM1466 266V322M1488 266L1496 324M1715 345L1722 370L1745 378M1715 345L1740 352M1242 368Q1262 360 1260 332L1246 336"/></g>
            </g>
            <g class="cutout"><rect x="54" y="31" width="15" height="9" rx="4"/><rect x="107" y="33" width="15" height="9" rx="4"/></g>
            <g><circle cx="36.200" cy="55.700" r="17.500"/><circle cx="181.400" cy="55.700" r="17.500"/></g>
            <g class="cutout"><circle cx="36.200" cy="55.700" r="10.500"/><circle cx="181.400" cy="55.700" r="10.500"/></g>
          </svg>
          <span class="ride-name">Car</span>
          <span class="ride-desc">Comfortable &amp; Safe</span>
          <span class="ride-price"><b>৳242</b> • 2.5 km</span>
        </button>
        <button class="ride" type="button" aria-pressed="false">
          <svg viewBox="0 0 115 80" width="115" height="80">
            <g transform="scale(.4209 .3333) translate(-795 -246)"><path fill-rule="evenodd" d="M800 445V395H795V378H800V362H880V353H800V290Q810 246 850 246H990Q1010 260 1030 320L1036 355L1042 360V370L1032 378Q1060 382 1067 407Q1045 393 1028 400Q1002 410 997 445ZM885 267Q878 267 878 275V370L890 390L893 420Q893 428 900 428H925Q933 428 933 420V275Q933 267 928 267ZM950 267Q945 267 945 275V330Q945 338 950 338H980Q988 338 988 330Q985 267 980 267ZM1003 267L995 272Q995 310 1003 332L1026 325Q1020 300 1003 267Z"/></g>
            <path d="M6 69H14A4 4 0 0 0 23 69H31A12.500 11 0 0 1 6 69Z"/>
            <circle cx="101" cy="66" r="9" fill="none" stroke="#000" stroke-width="9"/>
          </svg>
          <span class="ride-name">CNG</span>
          <span class="ride-desc">Eco-friendly</span>
          <span class="ride-price"><b>৳126</b> • 2.5 km</span>
        </button>
      </div>
    </section>

    <button class="confirm" type="button">
      <svg viewBox="0 0 24 24" width="36" height="36" fill="currentColor"><path d="M16.1716 10.9999L10.8076 5.63589L12.2218 4.22168L20 11.9999L12.2218 19.778L10.8076 18.3638L16.1716 12.9999H4V10.9999H16.1716Z"/></svg>
      Confirm &amp; Find Rides
    </button>
  </main>
</div>

<footer class="footer">
  <div class="footer-inner">
    <div class="footer-cols">
      <div class="footer-brand">
        <a class="logo logo-lg" href="#"><svg class="logo-pin"><use href="#logo-pin"/></svg><span class="logo-name">Safar</span></a>
        <div class="stores">
          <a class="store" href="#">
            <svg viewBox="0 0 40 52" width="40" height="52"><path fill="#58c5f0" d="M0 2V50L22 26Z"/><path fill="#67e07f" d="M0 2Q2 -1 6 2L30 19L22 26Z"/><path fill="#f7c63f" d="M30 19L39 25Q41 27 39 28L30 34L22 26Z"/><path fill="#dd4350" d="M0 50Q2 53 6 50L30 34L22 26Z"/></svg>
            <span class="store-text store-google"><small>GET IT ON</small>Google Play</span>
          </a>
          <a class="store" href="#">
            <svg viewBox="0 0 36 44" width="36" height="44" fill="#fff"><path d="M26 0Q27 8 18 11Q17 3 26 0ZM18 14Q22 12 26 12Q32 12 35 17Q30 20 30 26Q31 32 36 34Q33 41 29 43Q26 44 23 42Q18 40 14 42Q10 44 7 42Q0 35 0 25Q0 12 10 12Q14 13 18 14Z"/></svg>
            <span class="store-text store-apple"><small>Download on the</small>App Store</span>
          </a>
        </div>
      </div>
      <nav class="footer-col">
        <h3>Navigate</h3>
        <a href="#">Home</a>
        <a href="#">Subscription</a>
        <a href="#">Services</a>
        <a href="#">Support</a>
      </nav>
      <nav class="footer-col">
        <h3>Legal</h3>
        <a href="#">Terms &amp; Conditions</a>
        <a href="#">Privacy Policy</a>
      </nav>
      <div class="footer-col">
        <h3>Socials</h3>
        <div class="socials">
          <a href="#" aria-label="Facebook"><svg viewBox="0 0 64 64" width="64" height="64"><circle cx="32" cy="32" r="32" fill="#3b76ea"/><path fill="#fff" d="M27 64V42H19V32H27V26Q27 13 40 13Q44 13 46 14V22H42Q36 22 36 28V32H46L44 42H36V64Q32 65 27 64Z"/></svg></a>
          <a href="#" aria-label="Instagram"><svg viewBox="0 0 64 64" width="64" height="64"><defs><linearGradient id="ig" x1="0" y1="1" x2="1" y2="0"><stop offset="0" stop-color="#fbd160"/><stop offset=".35" stop-color="#f0774a"/><stop offset=".6" stop-color="#e4504f"/><stop offset="1" stop-color="#a83fc0"/></linearGradient></defs><rect width="64" height="64" rx="14" fill="url(#ig)"/><g fill="none" stroke="#fff" stroke-width="4"><rect x="11" y="11" width="43" height="43" rx="12"/><circle cx="32" cy="32" r="10"/></g><circle cx="44" cy="20" r="3" fill="#fff"/></svg></a>
          <a href="#" aria-label="X"><svg viewBox="0 0 64 64" width="64" height="64"><rect width="64" height="64" rx="10"/><path fill="none" stroke="#fff" stroke-width="3" d="M16 15H24L49 50H41ZM47 14L34 29M29 35L16 50"/></svg></a>
        </div>
      </div>
    </div>
    <p class="copyright">© 2025 Safar. All rights reserved.</p>
  </div>
</footer>
</body>
</html>
```

FILE: styles.css
```css
* { box-sizing: border-box; }

body {
  margin: 0;
  background: #fff;
  color: #101828;
  font-family: Inter, "Liberation Sans", "Noto Sans", sans-serif;
  font-size: 27px;
  line-height: 40px;
}

h1, h2, h3, p { margin: 0; }
a { color: inherit; text-decoration: none; }
svg { display: block; flex: none; }
button { font-family: inherit; border: 0; cursor: pointer; }
.sprite { display: none; }

.page { padding: 16px 0 176px 30px; }

/* Navbar */
.navbar {
  display: grid;
  grid-template-columns: 1fr auto 1fr;
  align-items: center;
  max-width: 2560px;
  height: 120px;
  margin: 0 auto;
  padding: 0 40px;
  border-radius: 12px;
  background: #fcf2ca;
  box-shadow: 0 8px 12px -2px rgba(0, 0, 0, .1), 0 4px 8px -4px rgba(0, 0, 0, .1);
}
.logo { display: flex; align-items: center; gap: 6px; color: #16212e; }
.logo-pin { width: 48px; height: 64px; fill: #45877f; }
.logo-name { font: 600 37px/60px "Noto Sans", "Open Sans", sans-serif; padding-bottom: 4px; }
.logo-lg { gap: 10px; }
.logo-lg .logo-pin { width: 72px; height: 96px; }
.logo-lg .logo-name { font-size: 56px; line-height: 92px; }
.nav-links { display: flex; gap: 112px; color: #1e2939; font-weight: 500; }
.nav-actions { display: flex; gap: 24px; justify-content: flex-end; margin-right: 16px; }
.btn {
  height: 72px;
  padding: 0 32px;
  border-radius: 12px;
  font-size: 28px;
  font-weight: 600;
}
.btn-light { background: #e5e7eb; color: #1e2939; }
.btn-dark { background: #0d290f; color: #fff; }

/* Main column */
.content {
  display: flex;
  flex-direction: column;
  max-width: 1344px;
  margin: 0 auto;
  padding-top: 48px;
}
h1 { font-size: 69px; line-height: 80px; font-weight: 700; text-align: center; }
.lead { margin: 32px 0 64px; color: #4a5565; font-size: 34px; line-height: 56px; text-align: center; white-space: nowrap; align-self: center; }

.dot { width: 24px; height: 24px; border-radius: 50%; flex: none; }
.dot-lg { width: 32px; height: 32px; }
.dot-green { background: #3fa34d; }
.dot-blue { background: #2c5cf3; }

.legend {
  display: flex;
  align-items: center;
  justify-content: center;
  gap: 48px;
  height: 148px;
  border: 2px solid #e0faea;
  border-radius: 32px;
  background: linear-gradient(90deg, #f2fdf4, #eff5fe);
}
.legend-item { display: flex; align-items: center; gap: 16px; font-size: 31px; line-height: 48px; font-weight: 600; }
.legend-pickup { color: #2f7f3d; }
.legend-dest { color: #2146cb; }
.legend-divider { width: 2px; height: 48px; background: #d1d5dc; }

.card {
  margin-top: 64px;
  border-radius: 32px;
  background: #fff;
  box-shadow: 0 20px 30px -6px rgba(0, 0, 0, .1), 0 8px 12px -8px rgba(0, 0, 0, .1);
}

/* Map */
.map-card { display: flex; flex-direction: column; gap: 32px; padding: 48px; }
.locate {
  display: flex;
  align-items: center;
  align-self: flex-end;
  gap: 16px;
  height: 80px;
  padding: 0 32px;
  border-radius: 16px;
  background: #2c5cf3;
  color: #fff;
  font-size: 31px;
  font-weight: 500;
  box-shadow: 0 8px 12px -2px rgba(0, 0, 0, .1), 0 4px 8px -4px rgba(0, 0, 0, .1);
}
.map {
  position: relative;
  height: 900px;
  border-radius: 32px;
  overflow: hidden;
  font-family: "Liberation Sans", Arial, sans-serif;
  box-shadow: 0 40px 50px -10px rgba(0, 0, 0, .1), 0 16px 20px -12px rgba(0, 0, 0, .1);
}
.map-canvas { width: 100%; height: 100%; }
.map-canvas path { vector-effect: non-scaling-stroke; }
.line, .road-case, .road-fill, .lane-case, .lane-fill, .wide-case, .wide-fill { fill: none; stroke-linejoin: round; stroke-linecap: round; }
.lane-case { stroke: #d3cecb; stroke-width: 10px; }
.lane-fill { stroke: #e9e9ea; stroke-width: 8px; }
.road-case { stroke: #d4d0cf; stroke-width: 11px; }
.road-fill { stroke: #fff; stroke-width: 9px; }
.wide-case { stroke: #c9c5c2; stroke-width: 24px; }
.wide-fill { stroke: #fff; stroke-width: 22px; }
.culverts { fill: none; stroke: #555; stroke-width: 5px; stroke-dasharray: 2 4 2 30; }
.place, .street, .lake { font-family: "Noto Sans", "Noto Sans Bengali", sans-serif; paint-order: stroke; stroke: rgba(255, 255, 255, .75); stroke-width: 3px; stroke-linejoin: round; }
.place { fill: #7c7c7c; font-size: 26px; }
.street { fill: #333; font-size: 20px; }
.street .latin, .street .narrow { font-size: 15px; }
.lake { fill: #6f9fd0; font-size: 18px; font-style: italic; }

.map-zoom, .map-search {
  position: absolute;
  top: 20px;
  border: 4px solid rgba(0, 0, 0, .2);
  background-clip: padding-box;
}
.map-zoom { left: 20px; border-radius: 8px; overflow: hidden; }
.map-zoom button {
  display: flex;
  align-items: center;
  justify-content: center;
  width: 60px;
  height: 60px;
  padding: 8px 0 0;
  background: #fff;
}
.map-zoom button:first-child { border-bottom: 2px solid #ccc; }
.map-zoom svg { fill: none; stroke: #000; stroke-width: 4px; }
.map-search { right: 20px; padding: 0; border-radius: 12px; background-color: #fff; }
.map-search svg { fill: none; stroke: #000; stroke-width: 4px; stroke-linecap: round; }

.map-tip {
  position: absolute;
  padding: 8px 18px;
  border-radius: 10px;
  background: rgba(255, 255, 255, .88);
  color: #222;
  font-size: 25px;
  white-space: nowrap;
  transform: translateX(-50%);
  box-shadow: 0 2px 6px rgba(0, 0, 0, .12);
}
.tip-pickup { left: 272px; top: 442px; }
.tip-dest { left: 975px; top: 322px; }

.map-credit {
  position: absolute;
  right: 0;
  bottom: 0;
  display: flex;
  align-items: center;
  gap: 8px;
  padding: 0 10px;
  background: rgba(255, 255, 255, .8);
  color: #333;
  font-size: 24px;
  line-height: 34px;
}
.map-credit a { color: #2a72a8; }

/* Selected places */
.places { display: grid; grid-template-columns: 1fr 1fr; gap: 48px; margin-top: 64px; }
.place-card { padding: 48px; border: 2px solid; border-radius: 24px; }
.place-card h2 { display: flex; align-items: center; gap: 24px; margin-bottom: 16px; font-size: 31px; line-height: 48px; font-weight: 600; }
.place-card p { color: #364153; }
.place-pickup { border-color: #c5f3d2; background: #f1fdf4; }
.place-pickup h2 { color: #2a6637; }
.place-dest { border-color: #c0d8fb; background: #eff5fe; }
.place-dest h2 { color: #213ba5; }

/* Rides */
.rides-card { padding: 64px; }
.rides-card h2 { margin-bottom: 48px; font-size: 46px; line-height: 64px; font-weight: 700; text-align: center; }
.rides { display: grid; grid-template-columns: repeat(3, 1fr); gap: 48px; }
.ride {
  display: flex;
  flex-direction: column;
  align-items: center;
  gap: 16px;
  padding: 48px 0;
  border: 4px solid #e5e7eb;
  border-radius: 24px;
  background: linear-gradient(135deg, #f9fafb, #f3f4f6);
  color: #101828;
}
.ride svg { margin-bottom: 16px; }
.ride .cutout { fill: none; stroke: #f8f9fb; stroke-width: 3px; }
.ride .cutout path { vector-effect: non-scaling-stroke; }
.ride-name { font-size: 35px; line-height: 56px; font-weight: 600; }
.ride-desc { color: #4a5565; font-size: 27px; line-height: 40px; }
.ride-price { color: #3fa34d; font-size: 24px; line-height: 32px; font-weight: 500; }
.ride-price b { font-weight: 700; }
.ride-selected {
  border-color: #377a5d;
  background: linear-gradient(135deg, #ecfdf5, #d6f8e4);
  box-shadow: 0 20px 50px rgba(55, 122, 93, .2);
  transform: translateY(-4px);
}

.confirm {
  display: flex;
  align-items: center;
  justify-content: center;
  align-self: center;
  gap: 16px;
  margin-top: 64px;
  padding: 32px 96px;
  border-radius: 24px;
  background: linear-gradient(90deg, #3fa34d, #2f7f3d);
  color: #fff;
  font-size: 35px;
  line-height: 56px;
  font-weight: 600;
  box-shadow: 0 20px 30px -6px rgba(0, 0, 0, .1), 0 8px 12px -8px rgba(0, 0, 0, .1);
}

/* Footer */
.footer { padding: 80px 0 80px 30px; background: #f3f4f6; color: #1e2939; }
.footer-inner { max-width: 2560px; margin: 0 auto; padding: 0 32px; }
.footer-cols { display: grid; grid-template-columns: repeat(4, 1fr); gap: 48px; }
.footer-brand { display: flex; flex-direction: column; gap: 88px; }
.stores { display: flex; gap: 24px; }
.store {
  display: flex;
  align-items: center;
  gap: 14px;
  width: 240px;
  height: 80px;
  padding-left: 16px;
  border: 2px solid #a6a6a6;
  border-radius: 10px;
  background: #000;
  color: #fff;
}
.store-text { display: flex; flex-direction: column; font-size: 32px; line-height: 32px; white-space: nowrap; }
.store-text small { font-size: 18px; line-height: 20px; }
.store-google { font-family: Lato, sans-serif; font-size: 29px; }
.store-google small { font-size: 15px; }
.store-apple { font-weight: 500; }
.footer-col { display: flex; flex-direction: column; align-items: flex-start; gap: 8px; }
.footer-col h3 { margin-bottom: 8px; font-size: 35px; line-height: 56px; font-weight: 600; }
.socials { display: flex; gap: 24px; }
.copyright { margin-top: 64px; color: #6a7282; font-size: 24px; line-height: 32px; text-align: center; }
```
